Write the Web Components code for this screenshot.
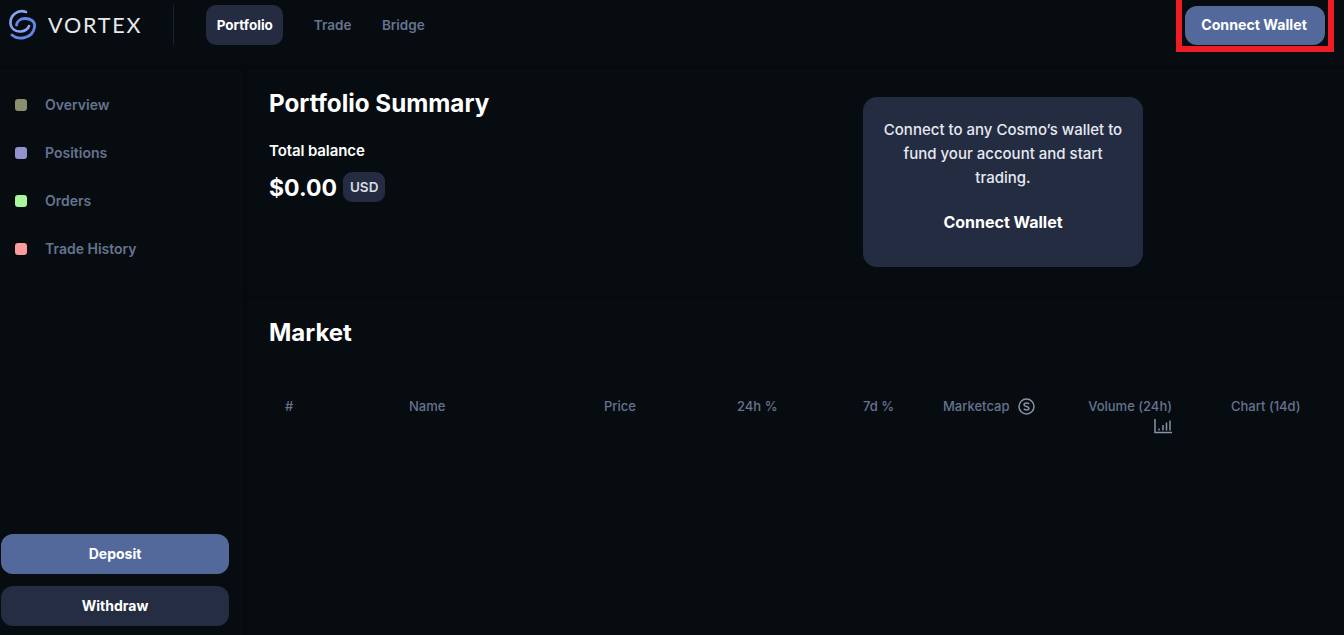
<!DOCTYPE html>
<html>
<head>
<meta charset="utf-8">
<style>
  html, body { margin: 0; height: 100%; background: #040a0e; overflow: hidden; }
  body { font-family: "Inter", "Liberation Sans", sans-serif; }
</style>
</head>
<body>
<vx-app></vx-app>

<script>
class VxLogo extends HTMLElement {
  constructor() {
    super();
    this.attachShadow({ mode: 'open' }).innerHTML = `
      <style>
        :host { display: flex; align-items: center; gap: 11px; }
        svg { display: block; }
        span { font: 400 21.5px "Lato", sans-serif; letter-spacing: 1.8px; color: #e8e9ec; }
      </style>
      <svg width="28" height="32" viewBox="9 9 28 32" fill="none" stroke-linecap="round">
        <path d="M26 12C18 9 10 15 10.500 23.500 11 29 16 32 21 31.500 25 31 28 29 29 26" stroke="#8aa3f2" stroke-width="2.600"/>
        <path d="M12 35C19 41 33 38 34.500 27 35.500 21 30 18.500 25 18.500 20.500 18.500 17 21 16.500 25" stroke="#6585ea" stroke-width="2.800"/>
      </svg>
      <span>VORTEX</span>`;
  }
}
customElements.define('vx-logo', VxLogo);

class VxButton extends HTMLElement {
  constructor() {
    super();
    this.attachShadow({ mode: 'open' }).innerHTML = `
      <style>
        :host { display: flex; align-items: center; justify-content: center; height: 40px; border-radius: 12px;
                box-sizing: border-box; padding-bottom: 1px;
                background: #252d42; color: #fff; font-size: 14px; font-weight: 700; }
        :host([primary]) { background: #54699b; }
      </style>
      <slot></slot>`;
  }
}
customElements.define('vx-button', VxButton);

class VxHeader extends HTMLElement {
  constructor() {
    super();
    this.attachShadow({ mode: 'open' }).innerHTML = `
      <style>
        :host { display: flex; align-items: center; height: 50px; padding: 0 19px 15px 9px; margin-bottom: 4px; background: #070c11; }
        .rule { width: 1px; height: 40px; background: #1a2230; margin: 0 32px 0 31px; }
        nav { display: flex; align-items: center; gap: 30.500px; font-size: 13.500px; font-weight: 600; color: #66738f; flex: 1; }
        nav b { display: flex; align-items: center; height: 40px; padding: 0 10.500px; border-radius: 10px;
                background: #252c42; color: #fff; font-weight: 700; font-size: 13.500px; }
        vx-button { width: 140px; height: 39px; padding-right: 2px; font-size: 14.200px; }
      </style>
      <vx-logo></vx-logo>
      <div class="rule"></div>
      <nav><b>Portfolio</b><span>Trade</span><span>Bridge</span></nav>
      <vx-button primary>Connect Wallet</vx-button>`;
  }
}
customElements.define('vx-header', VxHeader);

class VxSideLink extends HTMLElement {
  constructor() {
    super();
    this.attachShadow({ mode: 'open' }).innerHTML = `
      <style>
        :host { display: flex; align-items: center; gap: 18px; height: 48px; padding-left: 15px;
                color: #66738f; font-size: 14px; font-weight: 600; }
        i { width: 12px; height: 12px; border-radius: 3px; background: var(--dot); }
        span { margin-top: -2px; }
      </style>
      <i></i><span><slot></slot></span>`;
  }
}
customElements.define('vx-side-link', VxSideLink);

class VxSidebar extends HTMLElement {
  constructor() {
    super();
    this.attachShadow({ mode: 'open' }).innerHTML = `
      <style>
        :host { display: flex; flex-direction: column; width: 243px; background: #070c11; padding: 12px 0 9px; box-sizing: border-box; }
        .links { flex: 1; }
        .actions { display: flex; flex-direction: column; gap: 12px; padding: 0 14px 0 1px; }
      </style>
      <div class="links">
        <vx-side-link style="--dot:#8a8d6e">Overview</vx-side-link>
        <vx-side-link style="--dot:#9491cf">Positions</vx-side-link>
        <vx-side-link style="--dot:#a9f79c">Orders</vx-side-link>
        <vx-side-link style="--dot:#fb9b9b">Trade History</vx-side-link>
      </div>
      <div class="actions">
        <vx-button primary>Deposit</vx-button>
        <vx-button>Withdraw</vx-button>
      </div>`;
  }
}
customElements.define('vx-sidebar', VxSidebar);

class VxSummary extends HTMLElement {
  constructor() {
    super();
    this.attachShadow({ mode: 'open' }).innerHTML = `
      <style>
        :host { display: flex; height: 226px; background: #070c11; padding: 0 0 0 22px; box-sizing: border-box; color: #fff; }
        .left { width: 594px; }
        h2 { margin: 20px 0 0; font-size: 24.200px; line-height: 30px; font-weight: 700; }
        .label { margin-top: 23px; font-size: 15px; line-height: 18px; font-weight: 600; letter-spacing: -0.100px; }
        .bal { display: flex; align-items: center; gap: 6px; margin-top: 14px; font-size: 23px; font-weight: 700; }
        .bal span { display: flex; align-items: center; height: 30px; margin-top: -2px; padding: 0 7px; border-radius: 9px;
                    background: #252c42; color: #d8dce6; font-size: 13.500px; font-weight: 600; }
        .card { width: 280px; height: 170px; margin-top: 28px; border-radius: 14px; background: #242c41; box-sizing: border-box;
                padding: 21px 16px 0; text-align: center; }
        .card p { margin: 0; font-size: 15px; line-height: 24px; font-weight: 500; color: #e6e9f2; }
        .card b { display: block; margin-top: 22px; font-size: 16px; line-height: 20px; font-weight: 700; }
      </style>
      <div class="left">
        <h2>Portfolio Summary</h2>
        <div class="label">Total balance</div>
        <div class="bal">$0.00<span>USD</span></div>
      </div>
      <div class="card">
        <p>Connect to any Cosmo’s wallet to fund your account and start trading.</p>
        <b>Connect Wallet</b>
      </div>`;
  }
}
customElements.define('vx-summary', VxSummary);

class VxMarket extends HTMLElement {
  constructor() {
    super();
    this.attachShadow({ mode: 'open' }).innerHTML = `
      <style>
        :host { display: block; flex: 1; background: #070c11; padding: 20px 0 0 22px; color: #fff; }
        h2 { margin: 0; font-size: 24px; line-height: 28px; font-weight: 700; }
        .head { display: grid; grid-template-columns: 124px 195px 133px 126px 80px 145px 143px auto;
                margin: 51px 0 0 16px; color: #66738f; font-size: 13px; font-weight: 500; line-height: 16px; }
        .mc { display: flex; align-items: center; gap: 9px; height: 16px; white-space: nowrap; }
        .vol { display: flex; flex-direction: column; align-items: flex-end; width: 84px; white-space: nowrap; }
        .vol svg { margin-top: 5px; }
      </style>
      <h2>Market</h2>
      <div class="head">
        <span>#</span><span>Name</span><span>Price</span><span>24h %</span><span>7d %</span>
        <div class="mc">Marketcap
          <svg width="17" height="17" viewBox="0 0 17 17" fill="none" stroke="#8b93a6" stroke-width="1.500">
            <circle cx="8.500" cy="8.500" r="7.500"/>
            <path d="M11 6.200C10.500 5.300 9.600 5 8.500 5 7 5 6 5.700 6 6.800c0 2.400 5 1.100 5 3.500C11 11.400 10 12 8.500 12c-1.200 0-2.200-.4-2.700-1.300"/>
          </svg>
        </div>
        <div class="vol">Volume (24h)
          <svg width="18" height="15" viewBox="0 0 18 15" fill="none" stroke="#8b93a6" stroke-width="1.500">
            <path d="M1 0v13.500h17"/>
            <path d="M5 9.500v2M9 6v5.500M12.500 3.500v8M16 1.500v10"/>
          </svg>
        </div>
        <span style="white-space:nowrap">Chart (14d)</span>
      </div>`;
  }
}
customElements.define('vx-market', VxMarket);

class VxApp extends HTMLElement {
  constructor() {
    super();
    this.attachShadow({ mode: 'open' }).innerHTML = `
      <style>
        :host { display: flex; flex-direction: column; height: 635px; position: relative; overflow: hidden; }
        .body { flex: 1; display: flex; gap: 4px; min-height: 0; }
        .main { flex: 1; display: flex; flex-direction: column; gap: 4px; }
        .mark { position: absolute; left: 1176px; top: -6px; width: 146px; height: 46px; border: 6px solid #ee1c25; }
      </style>
      <vx-header></vx-header>
      <div class="body">
        <vx-sidebar></vx-sidebar>
        <div class="main">
          <vx-summary></vx-summary>
          <vx-market></vx-market>
        </div>
      </div>
      <div class="mark"></div>`;
  }
}
customElements.define('vx-app', VxApp);
</script>
</body>
</html>
